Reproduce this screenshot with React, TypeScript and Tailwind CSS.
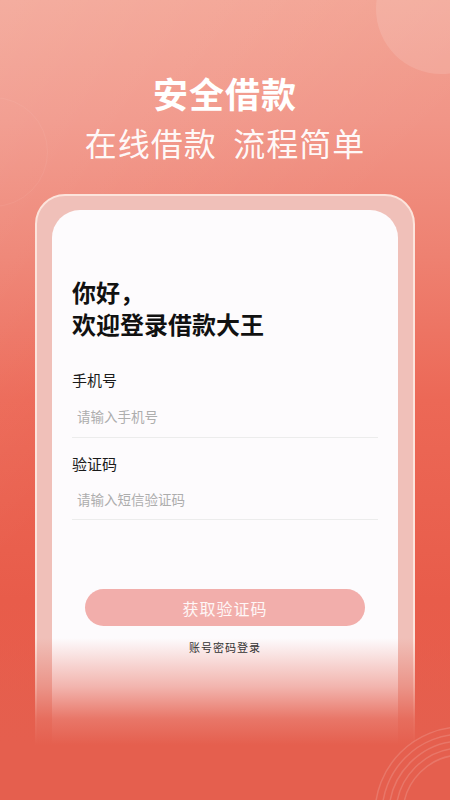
export default function App() {
  return (
    <div
      className="relative h-[800px] w-[450px] overflow-hidden bg-[linear-gradient(180deg,#f3a292_0%,#f19587_15%,#ee8171_32%,#ec6856_50%,#e85c4a_75%,#e55f4e_100%)]"
      style={{ fontFamily: '"Noto Sans CJK SC", "Noto Sans", sans-serif' }}
    >
      {/* background decorations */}
      <div className="pointer-events-none absolute inset-0 bg-[linear-gradient(135deg,rgba(255,255,255,0.12)_0%,rgba(255,255,255,0)_45%)]" />
      <div className="pointer-events-none absolute -top-[56px] left-[376px] h-[130px] w-[130px] rounded-full bg-white/12" />
      <div className="pointer-events-none absolute -left-[62px] top-[97px] h-[110px] w-[110px] rounded-full border border-white/5" />

      {/* heading */}
      <div className="relative flex flex-col items-center pt-[72px] text-white">
        <h1 className="text-[35px] font-bold leading-[42px] tracking-[1px]">
          安全借款
        </h1>
        <p className="mt-[8px] text-[32px] leading-[40px] tracking-[1px] text-white/95">
          在线借款&nbsp;&nbsp;流程简单
        </p>
      </div>

      {/* card frame */}
      <div className="relative mx-[35px] mt-[32px] rounded-[30px] border-2 border-[#fce4dc] bg-[#f0c0b9] px-[15px] pb-[10px] pt-[14px]">
        <div className="h-[600px] rounded-[28px] bg-[#fdfbfd] px-[20px] pt-[66px]">
          <h2 className="text-[24px] font-bold leading-[32px] text-[#111]">
            你好，
            <br />
            欢迎登录借款大王
          </h2>

          <div className="mt-[29px] text-[15px] leading-[22px] text-[#1a1a1a]">
            手机号
          </div>
          <div className="flex h-[47px] items-center border-b border-[#ececec] pt-[4px]">
            <input
              className="h-[22px] w-full bg-transparent pl-[5px] text-[13.5px] leading-[22px] text-[#333] outline-none placeholder:text-[#adadad]"
              placeholder="请输入手机号"
            />
          </div>

          <div className="mt-[15px] text-[15px] leading-[22px] text-[#1a1a1a]">
            验证码
          </div>
          <div className="flex h-[45px] items-center border-b border-[#ececec] pt-[4px]">
            <input
              className="h-[22px] w-full bg-transparent pl-[5px] text-[13.5px] leading-[22px] text-[#333] outline-none placeholder:text-[#adadad]"
              placeholder="请输入短信验证码"
            />
          </div>

          <button
            type="button"
            className="mx-[13px] mt-[69px] flex h-[37px] w-[280px] items-center justify-center rounded-full bg-[#f2aeab] text-[16px] tracking-[1px] text-white/90"
          >
            获取验证码
          </button>

          <p className="relative z-10 mt-[13px] text-center text-[11px] leading-[16px] tracking-[1px] text-[#333]">
            账号密码登录
          </p>
        </div>
      </div>

      {/* bottom fade over the card */}
      <div className="pointer-events-none absolute inset-x-0 bottom-0 h-[162px] bg-[linear-gradient(180deg,rgba(229,95,78,0)_0%,rgba(229,95,78,0.45)_30%,rgba(229,95,78,0.85)_50%,#e55f4e_66%,#e55f4e_100%)]" />
      <svg
        className="pointer-events-none absolute bottom-0 right-0"
        width="110"
        height="90"
        viewBox="340 710 110 90"
      >
        {[87, 80, 73, 66, 59].map((r) => (
          <circle
            key={r}
            cx="462"
            cy="814"
            r={r}
            fill="none"
            stroke="rgba(255,255,255,0.15)"
            strokeWidth="1.5"
          />
        ))}
      </svg>
    </div>
  );
}
